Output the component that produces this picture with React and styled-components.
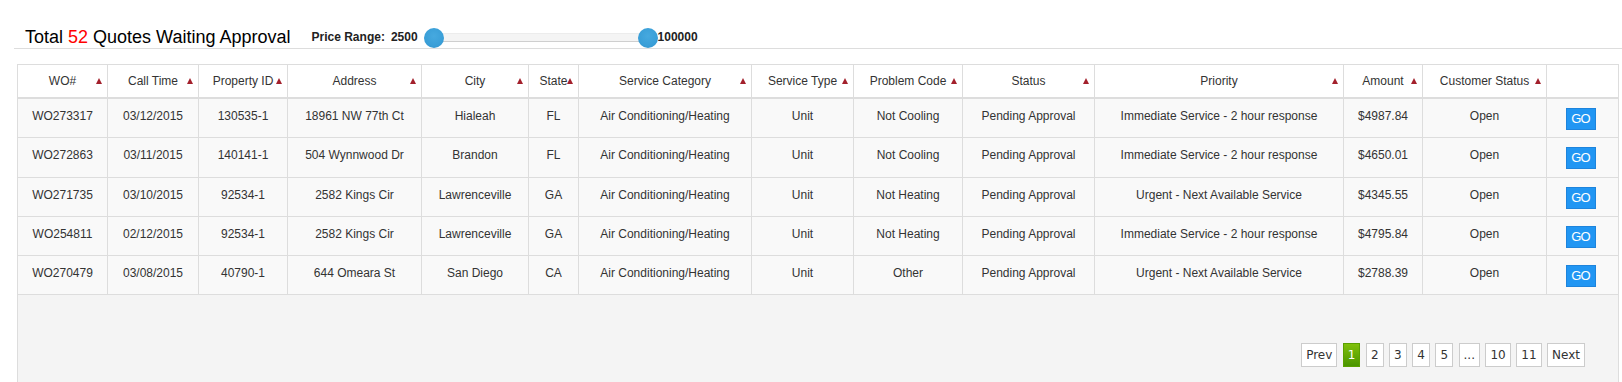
import styled, { createGlobalStyle, css } from 'styled-components';

const GlobalStyle = createGlobalStyle`
  * {
    box-sizing: border-box;
  }
  html,
  body {
    margin: 0;
    overflow: hidden;
    background: #fff;
    font-family: "Liberation Sans", Arial, sans-serif;
  }
`;

const COLS =
  '90px 91px 89px 134px 107px 50px 173px 102px 109px 132px 249px 79px 124px 1fr';

const columns = [
  'WO#',
  'Call Time',
  'Property ID',
  'Address',
  'City',
  'State',
  'Service Category',
  'Service Type',
  'Problem Code',
  'Status',
  'Priority',
  'Amount',
  'Customer Status',
];

const quotes = [
  ['WO273317', '03/12/2015', '130535-1', '18961 NW 77th Ct', 'Hialeah', 'FL', 'Not Cooling', 'Immediate Service - 2 hour response', '$4987.84'],
  ['WO272863', '03/11/2015', '140141-1', '504 Wynnwood Dr', 'Brandon', 'FL', 'Not Cooling', 'Immediate Service - 2 hour response', '$4650.01'],
  ['WO271735', '03/10/2015', '92534-1', '2582 Kings Cir', 'Lawrenceville', 'GA', 'Not Heating', 'Urgent - Next Available Service', '$4345.55'],
  ['WO254811', '02/12/2015', '92534-1', '2582 Kings Cir', 'Lawrenceville', 'GA', 'Not Heating', 'Immediate Service - 2 hour response', '$4795.84'],
  ['WO270479', '03/08/2015', '40790-1', '644 Omeara St', 'San Diego', 'CA', 'Other', 'Urgent - Next Available Service', '$2788.39'],
];

const pages = ['Prev', '1', '2', '3', '4', '5', '...', '10', '11', 'Next'];

const TopBar = styled.div`
  display: flex;
  align-items: center;
  height: 49px;
  margin-left: 14px;
  padding: 25px 0 0 11px;
  border-bottom: 1px solid #ddd;
`;

const Title = styled.h1`
  margin: 0 21px 0 0;
  font-size: 18px;
  font-weight: normal;
  line-height: 22px;
  color: #000;
  white-space: nowrap;
`;

const Count = styled.span`
  color: #f00;
`;

const RangeText = styled.span`
  font-size: 12px;
  font-weight: bold;
  line-height: 20px;
  color: #222;
  margin-left: ${(p) => p.gap || 0}px;
`;

const Slider = styled.div`
  position: relative;
  width: 234px;
  height: 20px;
  margin: 3px 0 0 6px;
`;

const Track = styled.div`
  position: absolute;
  left: 10px;
  right: 10px;
  top: 5px;
  height: 9px;
  background: #f4f4f4;
  border: 1px solid #ececec;
  border-bottom-color: #cfcfcf;
`;

const Handle = styled.div`
  position: absolute;
  top: 0;
  width: 20px;
  height: 20px;
  border-radius: 50%;
  background: radial-gradient(circle at 50% 40%, #46a9df 0%, #3a9fd8 60%, #3290c8 100%);
  ${(p) => (p.right ? 'right: 0;' : 'left: 0;')}
`;

const Panel = styled.div`
  margin: 15px 3px 0 17px;
  border: 1px solid #ddd;
  background: #f4f4f4;
  min-height: 330px;
`;

const HeadRow = styled.div`
  display: grid;
  grid-template-columns: ${COLS};
  height: 34px;
  background: #fff;
  border-bottom: 2px solid #ddd;
`;

const HeadCell = styled.div`
  position: relative;
  display: flex;
  align-items: center;
  justify-content: center;
  font-size: 12px;
  line-height: 20px;
  color: #333;
  white-space: nowrap;
  border-right: 1px solid #ddd;
  &:last-child {
    border-right: none;
  }
  ${(p) =>
    p.sortable &&
    css`
      &::after {
        content: '';
        position: absolute;
        right: 5px;
        top: 13px;
        border-left: 3.5px solid transparent;
        border-right: 3.5px solid transparent;
        border-bottom: 6px solid #a3202c;
      }
    `}
`;

const Row = styled.div`
  display: grid;
  grid-template-columns: ${COLS};
  height: 39.25px;
  background: #f9f9f9;
  border-bottom: 1px solid #ddd;
`;

const Cell = styled.div`
  padding: 7px 2px 0;
  font-size: 12px;
  line-height: 20px;
  color: #333;
  text-align: center;
  white-space: nowrap;
  overflow: hidden;
  border-right: 1px solid #ddd;
  &:last-child {
    border-right: none;
  }
`;

const ActionCell = styled.div`
  display: flex;
  justify-content: center;
  padding: 9px 4px 0 0;
`;

const GoButton = styled.button`
  width: 30px;
  height: 22px;
  padding: 0;
  border: 1px solid #1e84dc;
  background: #2196f3;
  color: #fff;
  font-family: "Liberation Sans", Arial, sans-serif;
  font-size: 13px;
  letter-spacing: -0.8px;
  line-height: 20px;
  cursor: pointer;
`;

const Pager = styled.div`
  display: flex;
  justify-content: flex-end;
  gap: 5.5px;
  padding: 48px 33px 0 0;
`;

const PageButton = styled.span`
  height: 24px;
  padding: 0 4px;
  border: 1px solid #ccc;
  background: #fff;
  color: #333;
  font-family: "DejaVu Sans", Verdana, sans-serif;
  font-size: 12px;
  line-height: 22px;
  ${(p) =>
    p.active &&
    css`
      background: linear-gradient(#80c00a, #4a9500);
      border-color: #5aa000;
      color: #fff;
    `}
`;

export default function App() {
  return (
    <>
      <GlobalStyle />
      <TopBar>
        <Title>
          Total <Count>52</Count> Quotes Waiting Approval
        </Title>
        <RangeText>Price Range:</RangeText>
        <RangeText gap={6}>2500</RangeText>
        <Slider>
          <Track />
          <Handle />
          <Handle right />
        </Slider>
        <RangeText>100000</RangeText>
      </TopBar>
      <Panel>
        <HeadRow>
          {columns.map((c) => (
            <HeadCell key={c} sortable>
              {c}
            </HeadCell>
          ))}
          <HeadCell />
        </HeadRow>
        {quotes.map(([wo, time, prop, addr, city, state, problem, priority, amount]) => (
          <Row key={wo}>
            <Cell>{wo}</Cell>
            <Cell>{time}</Cell>
            <Cell>{prop}</Cell>
            <Cell>{addr}</Cell>
            <Cell>{city}</Cell>
            <Cell>{state}</Cell>
            <Cell>Air Conditioning/Heating</Cell>
            <Cell>Unit</Cell>
            <Cell>{problem}</Cell>
            <Cell>Pending Approval</Cell>
            <Cell>{priority}</Cell>
            <Cell>{amount}</Cell>
            <Cell>Open</Cell>
            <ActionCell>
              <GoButton>GO</GoButton>
            </ActionCell>
          </Row>
        ))}
        <Pager>
          {pages.map((p) => (
            <PageButton key={p} active={p === '1'}>
              {p}
            </PageButton>
          ))}
        </Pager>
      </Panel>
    </>
  );
}
